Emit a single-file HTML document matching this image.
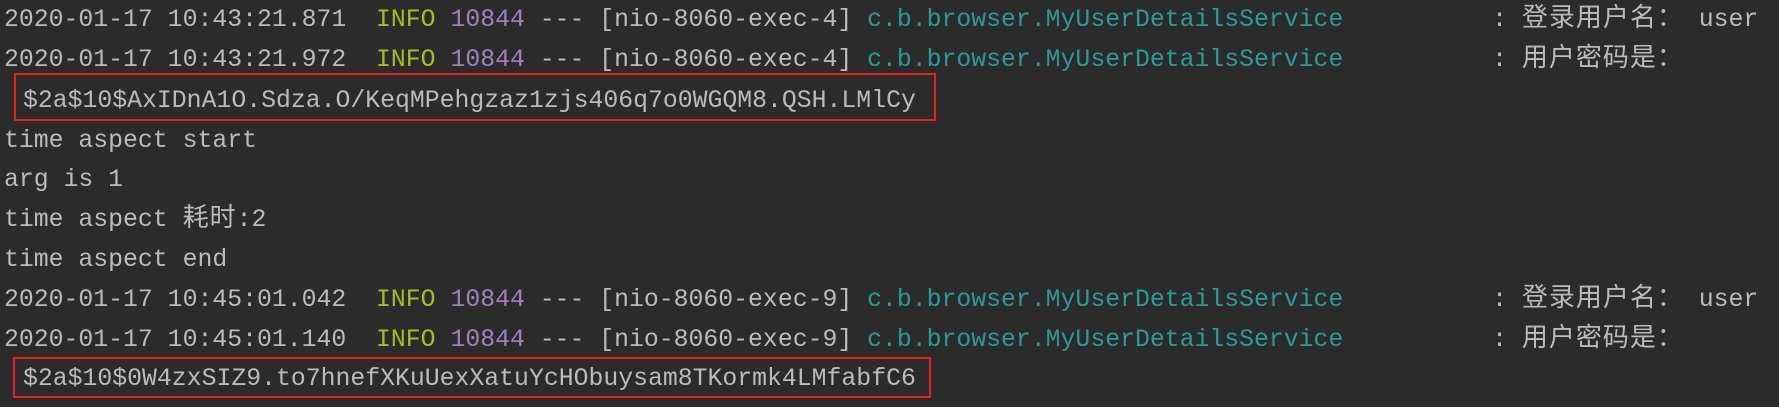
<!DOCTYPE html>
<html><head><meta charset="utf-8"><style>
html,body{margin:0;padding:0;background:#2b2b2b;width:1779px;height:407px;overflow:hidden}
.l{position:absolute;left:4px;height:40px;font-family:"Liberation Mono","Noto Sans CJK SC",monospace;font-size:24.8px;line-height:40px;color:#bbbbbb;white-space:pre}
.i{color:#a9bd1e}.p{color:#a47fc0}.c{color:#2a9a9a}
.z{font-family:"Noto Sans CJK SC",sans-serif;font-size:26px;letter-spacing:1px;line-height:0}
.b{position:absolute;border:2px solid #e8221f;box-sizing:border-box}
.ind{padding-left:19px}
</style></head><body>
<div class="l" style="top:0px">2020-01-17 10:43:21.871  <span class="i">INFO</span> <span class="p">10844</span> --- [nio-8060-exec-4] <span class="c">c.b.browser.MyUserDetailsService</span>          : <span class="z">登录用户名：</span> user</div>
<div class="l" style="top:40px">2020-01-17 10:43:21.972  <span class="i">INFO</span> <span class="p">10844</span> --- [nio-8060-exec-4] <span class="c">c.b.browser.MyUserDetailsService</span>          : <span class="z">用户密码是：</span></div>
<div class="l" style="top:81px"><span class="ind">$2a$10$AxIDnA1O.Sdza.O/KeqMPehgzaz1zjs406q7o0WGQM8.QSH.LMlCy</span></div>
<div class="l" style="top:121px">time aspect start</div>
<div class="l" style="top:160px">arg is 1</div>
<div class="l" style="top:200px">time aspect <span class="z">耗时</span>:2</div>
<div class="l" style="top:240px">time aspect end</div>
<div class="l" style="top:280px">2020-01-17 10:45:01.042  <span class="i">INFO</span> <span class="p">10844</span> --- [nio-8060-exec-9] <span class="c">c.b.browser.MyUserDetailsService</span>          : <span class="z">登录用户名：</span> user</div>
<div class="l" style="top:320px">2020-01-17 10:45:01.140  <span class="i">INFO</span> <span class="p">10844</span> --- [nio-8060-exec-9] <span class="c">c.b.browser.MyUserDetailsService</span>          : <span class="z">用户密码是：</span></div>
<div class="l" style="top:359px"><span class="ind">$2a$10$0W4zxSIZ9.to7hnefXKuUexXatuYcHObuysam8TKormk4LMfabfC6</span></div>
<div class="b" style="left:14px;top:73px;width:922px;height:48px"></div>
<div class="b" style="left:13px;top:357px;width:918px;height:41px"></div>
</body></html>
